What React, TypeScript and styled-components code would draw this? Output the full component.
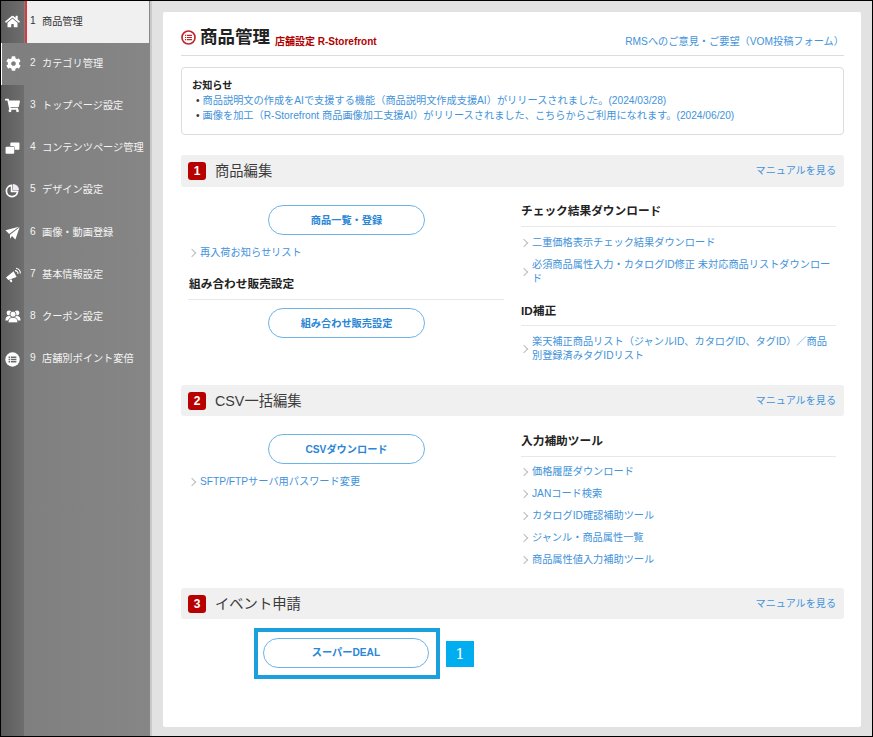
import React from "react";
import styled, { createGlobalStyle } from "styled-components";
import { FaHome, FaCog, FaShoppingCart } from "react-icons/fa";

const Global = createGlobalStyle`
  html, body { margin: 0; padding: 0; background: #e2e2e2; }
  * { box-sizing: border-box; }
  body { font-family: "Liberation Sans", "Noto Sans CJK JP", sans-serif; -webkit-font-smoothing: antialiased; }
`;

const Page = styled.div`
  width: 873px; height: 737px; display: flex; overflow: hidden;
  border: 1px solid #000; background: #e2e2e2;
`;
const Sidebar = styled.nav`
  width: 151px; flex: none; display: flex; flex-direction: column;
  background: linear-gradient(90deg, #7e7e7e, #868686); border-right: 2px solid #c9c9c9;
`;
const NavItem = styled.div<{ $state?: "active" | "next" }>`
  height: 42.2px; flex: none; display: flex; align-items: stretch;
  border-left: ${p => (p.$state === "next" ? "1px solid #fff" : "none")};
`;
const NavFill = styled.div`
  flex: 1; width: 23px; background: linear-gradient(90deg, #5c5c5c, #6e6e6e);
`;
const NavIcon = styled.div<{ $state?: "active" | "next" }>`
  width: ${p => (p.$state === "next" ? "22px" : "23px")}; flex: none; display: flex; align-items: center; justify-content: center;
  color: #fff; font-size: 15px; padding-bottom: 1px;
  ${p => (p.$state === "next" ? "" : "background: linear-gradient(90deg, #5c5c5c, #6e6e6e);")}
`;
const NavLabel = styled.div<{ $state?: "active" | "next" }>`
  flex: 1; display: flex; align-items: center; gap: 5px; white-space: nowrap;
  font-size: 10.2px; padding-bottom: 4px;
  padding-left: ${p => (p.$state === "active" ? "3px" : "6px")};
  color: ${p => (p.$state === "active" ? "#333" : "#f4f4f4")};
  border-left: ${p => (p.$state === "active" ? "2px solid #d9393e" : "none")};
  margin-left: ${p => (p.$state === "active" ? "1px" : "0")};
  margin-right: ${p => (p.$state === "active" ? "1px" : "0")};
  background: ${p => (p.$state === "active" ? "#f0f0f0" : "transparent")};
`;
const NavNum = styled.span`width: 7px;`;

const Main = styled.main`
  flex: 1; padding: 11px 11px 9px 11px; min-width: 0;
`;
const Card = styled.div`
  background: #fff; height: 100%; padding: 8px 17px 0 18px; border-radius: 2px;
`;
const TitleRow = styled.header`
  height: 36px; display: flex; align-items: center; border-bottom: 1px solid #dcdcdc;
`;
const TitleIcon = styled.svg`width: 15px; height: 15px; margin-right: 4px; flex: none;`;
const Title = styled.h1`
  margin: 0; font-size: 17.5px; font-weight: 700; color: #222; line-height: 1; white-space: nowrap;
`;
const SubTitle = styled.span`
  margin-left: 5px; margin-top: 5px; font-size: 10px; font-weight: 700; color: #b00000; white-space: nowrap;
`;
const FeedbackLink = styled.a`
  margin-left: auto; margin-top: 6px; font-size: 10.2px; color: #4293da; white-space: nowrap;
`;
const Notice = styled.section`
  margin-top: 11px; height: 68px; border: 1px solid #dcdcdc; border-radius: 4px; padding: 11px 10px 0 10px;
  font-size: 10.2px; line-height: 15px;
`;
const NoticeTitle = styled.div`font-weight: 700; color: #222; font-size: 10.2px; line-height: 14px;`;
const NoticeLine = styled.div`
  color: #4293da; white-space: nowrap; padding-left: 4px;
  &::before { content: "•"; color: #333; margin-right: 3px; }
`;
const SectionBar = styled.div<{ $mt: number; $h?: number }>`
  margin-top: ${p => p.$mt}px; height: ${p => p.$h ?? 32}px; background: #f0f0f0; border-radius: 3px;
  display: flex; align-items: center; padding: 0 8px 0 7px;
`;
const Badge = styled.span`
  width: 18px; height: 18px; background: #b80000; color: #fff; border-radius: 3px;
  font-size: 12px; font-weight: 700; display: flex; align-items: center; justify-content: center; flex: none;
`;
const SectionTitle = styled.h2`
  margin: 0 0 0 9px; padding-bottom: 3px; font-size: 14.3px; font-weight: 400; color: #3c3c3c;
`;
const ManualLink = styled.a`margin-left: auto; padding-bottom: 3px; font-size: 10.1px; color: #4293da;`;
const Columns = styled.div<{ $h: number }>`
  display: grid; grid-template-columns: 323px 315px; column-gap: 17px; height: ${p => p.$h}px;
`;
const Column = styled.div`display: flex; flex-direction: column; min-width: 0;`;
const PillRow = styled.div<{ $mt: number }>`
  margin-top: ${p => p.$mt}px; padding-left: 87px;
`;
const Pill = styled.a<{ $w?: number }>`
  width: ${p => p.$w ?? 157}px; height: 30px; border: 1px solid #6db3e8; border-radius: 15px; padding-bottom: 2px;
  display: flex; align-items: center; justify-content: center;
  font-size: 10.2px; font-weight: 700; color: #2a86d6; background: #fff;
`;
const LinkRow = styled.a<{ $mt: number; $pl?: number }>`
  display: flex; align-items: center; margin-top: ${p => p.$mt}px; padding-left: ${p => p.$pl ?? 0}px;
  font-size: 10.2px; line-height: 14px; color: #4293da;
  &::before {
    content: ""; flex: none; width: 5px; height: 5px; margin-right: 5px;
    border-top: 1px solid #bbb; border-right: 1px solid #bbb; transform: rotate(45deg);
  }
`;
const SubHeading = styled.h3<{ $mt: number; $ml?: number; $pb?: number }>`
  margin: ${p => p.$mt}px 0 0 ${p => p.$ml ?? 0}px; padding: 0 0 ${p => p.$pb ?? 7}px ${p => (p.$ml ? 1 : 0)}px;
  font-size: 11.7px; line-height: 16px; font-weight: 700; color: #222; border-bottom: 1px solid #e8e8e8;
`;
const HighlightRow = styled.div`
  margin-top: 9px; display: flex; align-items: center; padding-left: 73px;
`;
const Highlight = styled.div`
  width: 186px; height: 51px; border: 4px solid #1aa0dc; padding: 0 2px 2px 0;
  display: flex; align-items: center; justify-content: center; background: #fff;
`;
const Callout = styled.span`
  width: 28px; height: 26px; margin-left: 6px; background: #00aeef; color: #fff;
  display: flex; align-items: center; justify-content: center; font-size: 15px;
  font-family: "DejaVu Serif", "Liberation Serif", serif;
`;

const WindowsIcon = () => (
  <svg width="15" height="13" viewBox="0 0 17 15" fill="#fff">
    <path d="M6 1.5a1 1 0 0 1 1-1h8.5a1 1 0 0 1 1 1V8a1 1 0 0 1-1 1H11V6.5a2 2 0 0 0-2-2H6z" />
    <rect x="0.5" y="5.5" width="10" height="8" rx="1.2" />
  </svg>
);
const PieIcon = () => (
  <svg width="15" height="15" viewBox="0 0 15 15">
    <path d="M6.6 2.4a5.6 5.6 0 1 0 6 6H6.6z" fill="none" stroke="#fff" strokeWidth="1.7" />
    <path d="M8 1a6 6 0 0 1 6 6H8z" fill="#f3e9f5" />
  </svg>
);
const PlaneIcon = () => (
  <svg width="15" height="14" viewBox="0 0 15 14" fill="#fff">
    <path d="M0.5 4.2L14 0.8 4.2 8z" />
    <path d="M14.6 1.2L10.4 13.4 7 10 5 12.8 5 8.8z" />
  </svg>
);
const MegaphoneIcon = () => (
  <svg width="16" height="16" viewBox="0 0 16 16">
    <path d="M1 10.5L8.6 4.2 11.6 10 3.4 13z" fill="#fff" />
    <path d="M4.4 13l1.4 2.4 1.6-.8-1-2.4z" fill="#fff" />
    <path d="M10 3.6a3 3 0 0 1 3 3.4M11 1.2a5.4 5.4 0 0 1 4.4 5.2" fill="none" stroke="#fff" strokeWidth="1.1" />
  </svg>
);
const UsersIcon = () => (
  <svg width="16" height="13" viewBox="0 0 16 13" fill="#fff">
    <circle cx="4" cy="3" r="2.4" />
    <circle cx="12" cy="3" r="2.4" />
    <path d="M0.4 10.4c0-3 1.4-4.4 3.6-4.4s3.6 1.4 3.6 4.4zM8.4 10.4c0-3 1.4-4.4 3.6-4.4s3.6 1.4 3.6 4.4z" />
    <circle cx="8" cy="4.2" r="3" stroke="#666" strokeWidth="0.8" />
    <path d="M3.2 12.8c0-4 1.8-5.4 4.8-5.4s4.8 1.4 4.8 5.4z" stroke="#666" strokeWidth="0.8" />
  </svg>
);
const ListIcon = () => (
  <svg width="15" height="15" viewBox="0 0 15 15">
    <circle cx="7.5" cy="7.5" r="7.2" fill="#fff" />
    <path d="M3.6 4.5h1.6v1.5H3.6zM3.6 6.8h1.6v1.5H3.6zM3.6 9.1h1.6v1.5H3.6zM6 4.5h5.4v1.5H6zM6 6.8h5.4v1.5H6zM6 9.1h5.4v1.5H6z" fill="#6a6a6a" />
  </svg>
);

const nav: { label: string; icon: React.ReactNode; state?: "active" | "next" }[] = [
  { label: "商品管理", icon: <FaHome />, state: "active" },
  { label: "カテゴリ管理", icon: <FaCog />, state: "next" },
  { label: "トップページ設定", icon: <FaShoppingCart /> },
  { label: "コンテンツページ管理", icon: <WindowsIcon /> },
  { label: "デザイン設定", icon: <PieIcon /> },
  { label: "画像・動画登録", icon: <PlaneIcon /> },
  { label: "基本情報設定", icon: <MegaphoneIcon /> },
  { label: "クーポン設定", icon: <UsersIcon /> },
  { label: "店舗別ポイント変倍", icon: <ListIcon /> },
];

export default function App() {
  return (
    <>
      <Global />
      <Page>
        <Sidebar>
          {nav.map((n, i) => (
            <NavItem key={n.label} $state={n.state}>
              <NavIcon $state={n.state}>{n.icon}</NavIcon>
              <NavLabel $state={n.state}><NavNum>{i + 1}</NavNum><span>{n.label}</span></NavLabel>
            </NavItem>
          ))}
          <NavFill />
        </Sidebar>
        <Main>
          <Card>
            <TitleRow>
              <TitleIcon viewBox="0 0 15 15">
                <circle cx="7.5" cy="7.5" r="6.5" fill="none" stroke="#c0272d" strokeWidth="1.7" />
                <path d="M4 4.8h1.2V6H4zM4 6.9h1.2v1.2H4zM4 9h1.2v1.2H4zM6 4.8h5V6H6zM6 6.9h5v1.2H6zM6 9h5v1.2H6z" fill="#c0272d" />
              </TitleIcon>
              <Title>商品管理</Title>
              <SubTitle>店舗設定 R-Storefront</SubTitle>
              <FeedbackLink>RMSへのご意見・ご要望（VOM投稿フォーム）</FeedbackLink>
            </TitleRow>
            <Notice>
              <NoticeTitle>お知らせ</NoticeTitle>
              <NoticeLine>商品説明文の作成をAIで支援する機能（商品説明文作成支援AI）がリリースされました。(2024/03/28)</NoticeLine>
              <NoticeLine>画像を加工（R-Storefront 商品画像加工支援AI）がリリースされました、こちらからご利用になれます。(2024/06/20)</NoticeLine>
            </Notice>

            <SectionBar $mt={20}>
              <Badge>1</Badge>
              <SectionTitle>商品編集</SectionTitle>
              <ManualLink>マニュアルを見る</ManualLink>
            </SectionBar>
            <Columns $h={198}>
              <Column>
                <PillRow $mt={18}><Pill>商品一覧・登録</Pill></PillRow>
                <LinkRow $mt={11} $pl={8}>再入荷お知らせリスト</LinkRow>
                <SubHeading $mt={16} $ml={7}>組み合わせ販売設定</SubHeading>
                <PillRow $mt={8}><Pill>組み合わせ販売設定</Pill></PillRow>
              </Column>
              <Column>
                <SubHeading $mt={16}>チェック結果ダウンロード</SubHeading>
                <LinkRow $mt={9}>二重価格表示チェック結果ダウンロード</LinkRow>
                <LinkRow $mt={8}><span>必須商品属性入力・カタログID修正 未対応商品リストダウンロード</span></LinkRow>
                <SubHeading $mt={17} $pb={6}>ID補正</SubHeading>
                <LinkRow $mt={9}><span>楽天補正商品リスト（ジャンルID、カタログID、タグID）／商品別登録済みタグIDリスト</span></LinkRow>
              </Column>
            </Columns>

            <SectionBar $mt={0} $h={31}>
              <Badge>2</Badge>
              <SectionTitle>CSV一括編集</SectionTitle>
              <ManualLink>マニュアルを見る</ManualLink>
            </SectionBar>
            <Columns $h={172}>
              <Column>
                <PillRow $mt={18}><Pill>CSVダウンロード</Pill></PillRow>
                <LinkRow $mt={11} $pl={8}>SFTP/FTPサーバ用パスワード変更</LinkRow>
              </Column>
              <Column>
                <SubHeading $mt={17}>入力補助ツール</SubHeading>
                <LinkRow $mt={8}>価格履歴ダウンロード</LinkRow>
                <LinkRow $mt={8}>JANコード検索</LinkRow>
                <LinkRow $mt={8}>カタログID確認補助ツール</LinkRow>
                <LinkRow $mt={8}>ジャンル・商品属性一覧</LinkRow>
                <LinkRow $mt={8}>商品属性値入力補助ツール</LinkRow>
              </Column>
            </Columns>

            <SectionBar $mt={0} $h={31}>
              <Badge>3</Badge>
              <SectionTitle>イベント申請</SectionTitle>
              <ManualLink>マニュアルを見る</ManualLink>
            </SectionBar>
            <HighlightRow>
              <Highlight><Pill $w={166}>スーパーDEAL</Pill></Highlight>
              <Callout>1</Callout>
            </HighlightRow>
          </Card>
        </Main>
      </Page>
    </>
  );
}
